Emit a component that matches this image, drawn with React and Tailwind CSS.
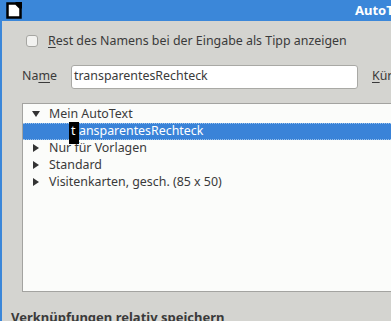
export default function App() {
  const rows = [
    { label: "Nur für Vorlagen" },
    { label: "Standard" },
    { label: "Visitenkarten, gesch. (85 x 50)" },
  ];

  return (
    <div
      className="w-[391px] h-[321px] overflow-hidden bg-[#d4d4d0] border-l-2 border-[#3b87d9] flex flex-col text-[12.4px] text-[#3a3a3a]"
      style={{ fontFamily: '"Noto Sans", "DejaVu Sans", sans-serif' }}
    >
      {/* Title Bar */}
      <div className="h-[21px] shrink-0 bg-[#3b87d9] flex items-center -ml-[2px] pl-[6px] overflow-hidden whitespace-nowrap">
        <svg width="16" height="17" viewBox="0 0 16 17" className="shrink-0">
          <path d="M1.5 1.5 H10 L14.5 6 V15.5 H1.5 Z" fill="#fff" stroke="#000" strokeWidth="2.5" strokeLinejoin="miter" />
          <path d="M9 0 H16 V7 Z" fill="#000" />
        </svg>
        <span className="ml-[333px] font-bold text-white text-[13px]">AutoText</span>
      </div>

      {/* Checkbox */}
      <div className="mt-[11px] h-[20px] flex items-center pl-[24px] whitespace-nowrap">
        <div className="w-[12px] h-[12px] shrink-0 rounded-[3px] border border-[#a6a6a2] bg-[#f2f2f0]" />
        <span className="ml-[10px]">
          <span className="underline underline-offset-2">R</span>est des Namens bei der Eingabe als Tipp anzeigen
        </span>
      </div>

      {/* Name */}
      <div className="mt-[14px] h-[24px] flex items-center pl-[20px] whitespace-nowrap">
        <span className="w-[49px] shrink-0">
          Na<span className="underline underline-offset-2">m</span>e
        </span>
        <div className="w-[287px] h-[24px] shrink-0 rounded-[3px] border border-[#a9a9a5] bg-white flex items-center pl-[2px]">
          transparentesRechteck
        </div>
        <span className="ml-[14px] shrink-0">
          <span className="underline underline-offset-2">K</span>ürzel
        </span>
      </div>

      {/* Tree */}
      <div className="mt-[14px] ml-[20px] h-[189px] shrink-0 border border-[#a3a3a0] border-r-0 bg-[#fbfcfa] pt-[2px] whitespace-nowrap">
        <div className="h-[17px] flex items-center pl-[9px]">
          <svg width="8" height="6" viewBox="0 0 8 6" className="shrink-0">
            <path d="M0 0 H8 L4 6 Z" fill="#333" />
          </svg>
          <span className="ml-[9px]">Mein AutoText</span>
        </div>
        <div className="h-[17px] flex items-center bg-[#3a83d8] border-y border-dotted border-[#9cc2ea] text-white relative">
          <span className="ml-[46px] bg-black h-[22px] w-[10px] flex items-center pl-[2px] -mb-[4px]">
            <span className="-mt-[4px]">t</span>
          </span>
          <span>ansparentesRechteck</span>
        </div>
        {rows.map((r) => (
          <div key={r.label} className="h-[17px] flex items-center pl-[10px]">
            <svg width="6" height="8" viewBox="0 0 6 8" className="shrink-0">
              <path d="M0 0 L6 4 L0 8 Z" fill="#333" />
            </svg>
            <span className="ml-[10px]">{r.label}</span>
          </div>
        ))}
      </div>

      {/* Bottom */}
      <div className="mt-[16px] pl-[9px] font-bold whitespace-nowrap text-[13px]">
        Verknüpfungen relativ speichern
      </div>
    </div>
  );
}
